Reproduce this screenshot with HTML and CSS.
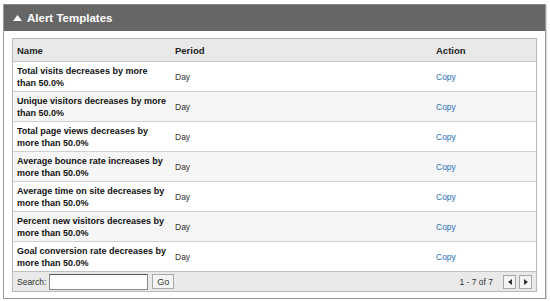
FILE: index.html
```html
<!DOCTYPE html>
<html>
<head>
<meta charset="utf-8">
<link rel="stylesheet" href="styles.css">
</head>
<body>
<div class="panel">
  <div class="panel-head">
    <svg class="caret" width="9" height="6" viewBox="0 0 9 6"><path d="M0 6 L4.5 0 L9 6 Z" fill="#fff"/></svg>
    <span>Alert Templates</span>
  </div>
  <div class="panel-body">
    <div class="grid">
      <table>
        <thead>
          <tr><th class="c-name">Name</th><th class="c-period">Period</th><th class="c-action">Action</th></tr>
        </thead>
        <tbody>
          <tr><td class="c-name">Total visits decreases by more than 50.0%</td><td>Day</td><td class="c-action"><a>Copy</a></td></tr>
          <tr class="alt"><td class="c-name">Unique visitors decreases by more than 50.0%</td><td>Day</td><td class="c-action"><a>Copy</a></td></tr>
          <tr><td class="c-name">Total page views decreases by more than 50.0%</td><td>Day</td><td class="c-action"><a>Copy</a></td></tr>
          <tr class="alt"><td class="c-name">Average bounce rate increases by more than 50.0%</td><td>Day</td><td class="c-action"><a>Copy</a></td></tr>
          <tr><td class="c-name">Average time on site decreases by more than 50.0%</td><td>Day</td><td class="c-action"><a>Copy</a></td></tr>
          <tr class="alt"><td class="c-name">Percent new visitors decreases by more than 50.0%</td><td>Day</td><td class="c-action"><a>Copy</a></td></tr>
          <tr><td class="c-name">Goal conversion rate decreases by more than 50.0%</td><td>Day</td><td class="c-action"><a>Copy</a></td></tr>
        </tbody>
      </table>
      <div class="footer">
        <label class="search">Search: <input type="text"></label>
        <button class="btn go">Go</button>
        <span class="spacer"></span>
        <span class="count">1 - 7 of 7</span>
        <button class="btn nav"><svg width="4" height="6" viewBox="0 0 4 6"><path d="M4 0 L0 3 L4 6 Z" fill="#333"/></svg></button>
        <button class="btn nav"><svg width="4" height="6" viewBox="0 0 4 6"><path d="M0 0 L4 3 L0 6 Z" fill="#333"/></svg></button>
      </div>
    </div>
  </div>
</div>
</body>
</html>
```
FILE: styles.css
```css
html, body { margin: 0; padding: 0; background: #fff; }
body { padding: 4px 4px 0 3px; font-family: "Liberation Sans", Arial, sans-serif; }
.panel {
  width: 541px;
  border: 1px solid #9a9a9a;
  border-top: none;
  box-shadow: 1px 1px 0 #d8d8d8;
}
.panel-head {
  height: 26px;
  background: #666;
  border-top: 1px solid #888;
  display: flex;
  align-items: center;
  padding-left: 9px;
  gap: 5px;
  color: #fff;
  font-weight: bold;
  font-size: 11.5px;
}
.caret { margin-top: -1px; }
.panel-body { padding: 7px 8px 6px 8px; }
.grid { border: 1px solid #b8b8b8; }
table { border-collapse: collapse; width: 100%; table-layout: fixed; }
th {
  background: #e9e9e9;
  height: 22px;
  font-size: 9.5px;
  font-weight: bold;
  text-align: left;
  padding: 0 0 0 4px;
  color: #222;
  border-bottom: 1px solid #c8c8c8;
}
th.c-name { width: 154px; }
th.c-action { width: 100px; }
td {
  height: 29px;
  padding: 0 0 0 4px;
  border-bottom: 1px solid #d0d0d0;
  vertical-align: middle;
  color: #333;
  font-size: 8.5px;
}
td.c-name {
  font-weight: bold;
  font-size: 9px;
  line-height: 12px;
  color: #111;
  padding-right: 4px;
}
td a { color: #2a6fb8; }
tr.alt td { background: #f6f6f6; }
tbody tr:last-child td { border-bottom: 1px solid #c0c0c0; }
.footer {
  background: #e9e9e9;
  height: 19px;
  display: flex;
  align-items: center;
  padding: 0 4px 0 4px;
  font-size: 8.5px;
  color: #333;
}
.search { display: flex; align-items: center; gap: 3px; }
.search input {
  width: 97px;
  height: 14px;
  border: 1px solid #888;
  border-top-color: #555;
  padding: 0;
  margin: 0;
  background: #fff;
}
.btn {
  border: 1px solid #a8a8a8;
  background: #f4f4f4;
  font-family: "Liberation Sans", Arial, sans-serif;
  font-size: 9px;
  color: #333;
  padding: 0;
  margin: 0;
  height: 15px;
  display: flex;
  align-items: center;
  justify-content: center;
}
.go { width: 22px; margin-left: 4px; }
.spacer { flex: 1; }
.count { margin-right: 7px; }
.nav { width: 13px; height: 14px; margin-left: 3px; }
```
